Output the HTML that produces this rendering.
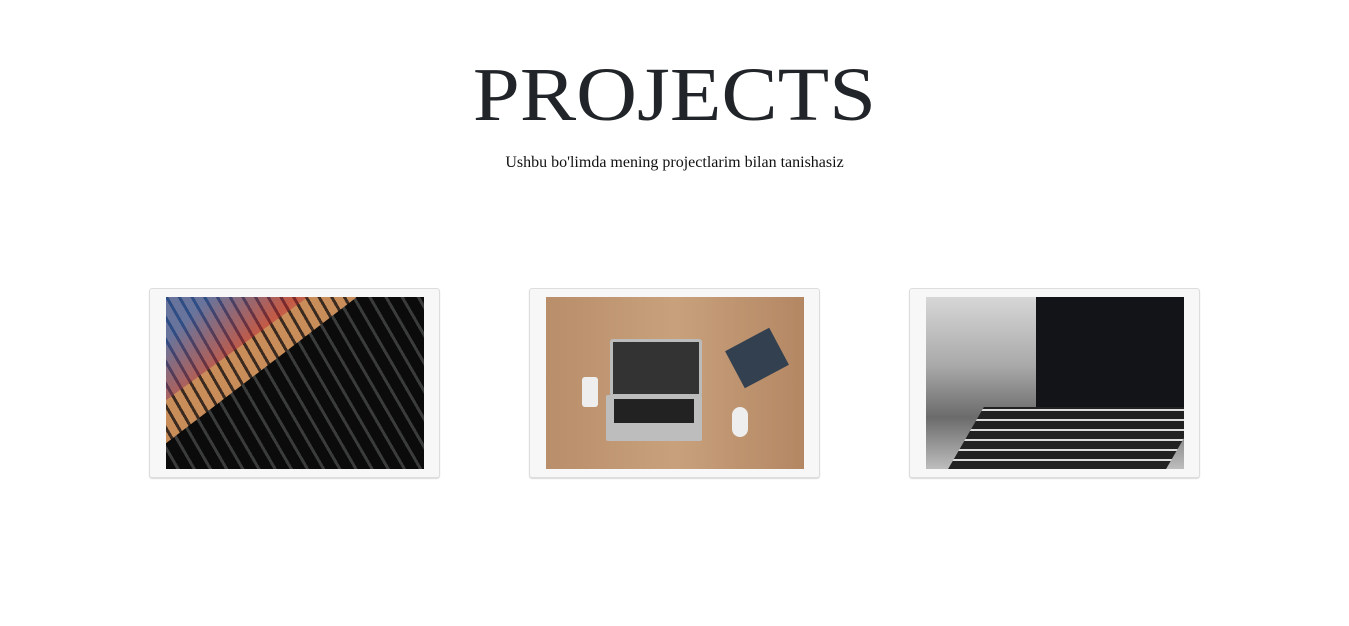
<!DOCTYPE html>
<html><head><meta charset="utf-8"><style>
body{margin:0;width:1349px;height:626px;background:#fff;overflow:hidden;position:relative;font-family:"Liberation Serif",serif}
h1{position:absolute;left:0;width:1349px;top:54px;margin:0;text-align:center;font-weight:400;font-size:76px;line-height:83px;color:#212529;transform:scaleX(1.11)}
p{position:absolute;left:0;width:1349px;top:154px;margin:0;text-align:center;font-size:16px;color:#111}
.card{position:absolute;top:288px;width:289px;height:188px;background:#f7f7f7;border:1px solid #ddd;border-radius:3px;box-shadow:0 1px 1px rgba(0,0,0,.15)}
.img{position:absolute;left:16px;top:8px;width:258px;height:172px;overflow:hidden}
.i1{background:repeating-linear-gradient(60deg,#0b0b0b 0 9px,#3a3c3c 9px 12px,#0b0b0b 12px 14px);}
.i1:before{content:"";position:absolute;left:0;top:0;width:100%;height:100%;background:repeating-linear-gradient(60deg,#c98d5a 0 8px,#3a2a20 8px 11px);clip-path:polygon(0 0,74% 0,0 85%)}
.i1:after{content:"";position:absolute;left:0;top:0;width:100%;height:100%;background:linear-gradient(135deg,rgba(40,100,200,.6) 10%,rgba(190,40,50,.5) 30%,rgba(0,0,0,0) 45%);clip-path:polygon(0 0,55% 0,0 60%)}
.i2{background:linear-gradient(90deg,#b98e6a,#c8a17c 50%,#b48763)}
.lap{position:absolute;left:64px;top:42px;width:86px;height:52px;background:#333;border:3px solid #bbb;border-radius:3px}
.kb{position:absolute;left:60px;top:98px;width:96px;height:46px;background:#bdbdbd;border-radius:2px}
.kb:before{content:"";position:absolute;left:8px;top:4px;width:80px;height:24px;background:#222}
.nb{position:absolute;left:186px;top:40px;width:50px;height:42px;background:#334050;transform:rotate(-28deg)}
.ph{position:absolute;left:36px;top:80px;width:16px;height:30px;background:#eee;border-radius:3px}
.ms{position:absolute;left:186px;top:110px;width:16px;height:30px;background:#eee;border-radius:8px}
.i3{background:linear-gradient(180deg,#d7d7d7 0,#a9a9a9 40%,#6b6b6b 70%,#bdbdbd 100%)}
.scr{position:absolute;left:110px;top:0;width:148px;height:116px;background:#121418}
.keys{position:absolute;left:40px;top:110px;width:218px;height:62px;background:repeating-linear-gradient(0deg,#222 0 8px,#ddd 8px 10px);transform:skewX(-30deg)}
</style></head><body>
<h1>PROJECTS</h1>
<p>Ushbu bo'limda mening projectlarim bilan tanishasiz</p>
<div class="card" style="left:149px"><div class="img i1"></div></div>
<div class="card" style="left:529px"><div class="img i2"><div class="lap"></div><div class="kb"></div><div class="nb"></div><div class="ph"></div><div class="ms"></div></div></div>
<div class="card" style="left:909px"><div class="img i3"><div class="scr"></div><div class="keys"></div></div></div>
</body></html>
